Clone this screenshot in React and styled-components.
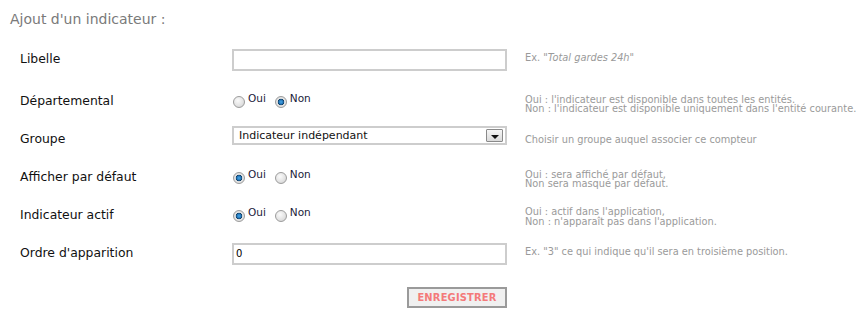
import React from "react";
import styled, { createGlobalStyle } from "styled-components";

const Global = createGlobalStyle`
  html, body { margin: 0; padding: 0; background: #fff; }
  body { font-family: "DejaVu Sans", Verdana, sans-serif; }
`;

const Page = styled.div`
  padding: 10px 0 0 10px;
  width: 855px;
`;

const Title = styled.h2`
  margin: 0;
  font-size: 14px;
  font-weight: normal;
  color: #7a7a7a;
  line-height: 18px;
`;

const Form = styled.div`
  display: grid;
  grid-template-columns: 194px 275px 1fr;
  grid-template-rows: 40px 40px 36px 40px 36px 40px;
  column-gap: 18px;
  margin-top: 12px;
  padding-left: 10px;
`;

const Label = styled.div`
  display: flex;
  align-items: center;
  font-size: 12.4px;
  color: #111;
  padding-bottom: ${(p) => p.$lift || 0}px;
`;

const Cell = styled.div`
  display: flex;
  align-items: center;
  padding-top: ${(p) => p.$shift || 0}px;
  padding-bottom: ${(p) => p.$lift || 0}px;
`;

const TextInput = styled.div`
  box-sizing: border-box;
  width: 275px;
  height: 22px;
  border: 2px solid #cdcdcd;
  background: #fff;
  font-size: 10px;
  color: #000;
  padding: 3px 2px 0;
`;

const Select = styled.div`
  box-sizing: border-box;
  width: 275px;
  height: 19px;
  border: 2px solid #cdcdcd;
  background: #fff;
  display: flex;
  align-items: center;
  justify-content: space-between;
  padding: 0 2px 0 5px;
  font-size: 11px;
  color: #111;
`;

const DropButton = styled.div`
  box-sizing: border-box;
  width: 17px;
  height: 13px;
  border: 1px solid #8a8a8a;
  border-radius: 1px;
  background: linear-gradient(#f6f6f6, #dadada);
  display: flex;
  align-items: flex-end;
  justify-content: center;
  padding-bottom: 2px;
  &::after {
    content: "";
    border-left: 4px solid transparent;
    border-right: 4px solid transparent;
    border-top: 4px solid #111;
  }
`;

const RadioGroup = styled.div`
  display: flex;
  gap: 9px;
  margin-left: 1px;
`;

const RadioOption = styled.label`
  display: flex;
  align-items: flex-start;
  font-size: 10.5px;
  color: #1a1a3a;
  gap: 3px;
`;

const RadioDot = styled.span`
  display: inline-block;
  box-sizing: border-box;
  width: 12px;
  height: 12px;
  border-radius: 50%;
  margin-top: 4px;
  border: 1px solid #9c9c9c;
  background: ${(p) =>
    p.$checked
      ? "radial-gradient(circle, #4aa8e8 0, #1f72b5 2.2px, #123a5c 3px, #e8e8e8 3.6px, #cfcfcf 100%)"
      : "radial-gradient(circle at 40% 35%, #fafafa 0, #e2e2e2 60%, #c8c8c8 100%)"};
`;

const Help = styled.div`
  display: flex;
  flex-direction: column;
  justify-content: center;
  font-size: 9.8px;
  line-height: 9.5px;
  color: #9a9a9a;
  white-space: nowrap;
  padding-top: ${(p) => p.$shift || 0}px;
  padding-bottom: ${(p) => p.$lift || 0}px;
`;

const Em = styled.em`
  font-style: italic;
`;

const Actions = styled.div`
  display: flex;
  padding-left: 397px;
  margin-top: 15px;
`;

const SaveButton = styled.button`
  box-sizing: border-box;
  width: 100px;
  height: 21px;
  border: 2px solid #9a9a9a;
  background: #f0f0f0;
  color: #f47a7a;
  font-family: "DejaVu Sans", Verdana, sans-serif;
  font-weight: bold;
  font-size: 9.9px;
  padding: 0;
  letter-spacing: 0.2px;
`;

function Radios({ value }) {
  return (
    <RadioGroup>
      <RadioOption>
        <RadioDot $checked={value === "oui"} />
        Oui
      </RadioOption>
      <RadioOption>
        <RadioDot $checked={value === "non"} />
        Non
      </RadioOption>
    </RadioGroup>
  );
}

export default function App() {
  return (
    <Page>
      <Global />
      <Title>Ajout d'un indicateur :</Title>
      <Form>
        <Label $lift={4}>Libelle</Label>
        <Cell>
          <TextInput />
        </Cell>
        <Help $lift={4}>
          <span>
            Ex. "<Em>Total gardes 24h</Em>"
          </span>
        </Help>

        <Label>Départemental</Label>
        <Cell>
          <Radios value="non" />
        </Cell>
        <Help $shift={8}>
          <span>Oui : l'indicateur est disponible dans toutes les entités.</span>
          <span>Non : l'indicateur est disponible uniquement dans l'entité courante.</span>
        </Help>

        <Label>Groupe</Label>
        <Cell $lift={5}>
          <Select>
            <span>Indicateur indépendant</span>
            <DropButton />
          </Select>
        </Cell>
        <Help $shift={3}>
          <span>Choisir un groupe auquel associer ce compteur</span>
        </Help>

        <Label>Afficher par défaut</Label>
        <Cell>
          <Radios value="oui" />
        </Cell>
        <Help $shift={6}>
          <span>Oui : sera affiché par défaut,</span>
          <span>Non sera masqué par défaut.</span>
        </Help>

        <Label>Indicateur actif</Label>
        <Cell>
          <Radios value="oui" />
        </Cell>
        <Help $shift={5}>
          <span>Oui : actif dans l'application,</span>
          <span>Non : n'apparaît pas dans l'application.</span>
        </Help>

        <Label>Ordre d'apparition</Label>
        <Cell $shift={4}>
          <TextInput>0</TextInput>
        </Cell>
        <Help>
          <span>Ex. "3" ce qui indique qu'il sera en troisième position.</span>
        </Help>
      </Form>
      <Actions>
        <SaveButton>ENREGISTRER</SaveButton>
      </Actions>
    </Page>
  );
}
